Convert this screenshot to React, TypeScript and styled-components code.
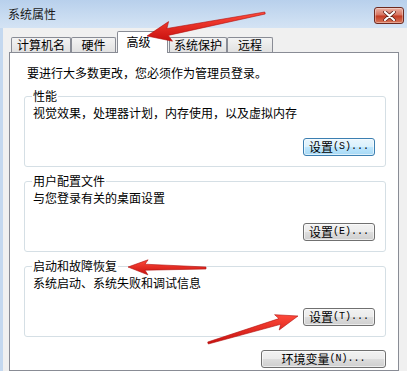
import styled, { createGlobalStyle } from 'styled-components';

const GlobalStyle = createGlobalStyle`
  html, body {
    margin: 0;
    padding: 0;
    background: #f0f0f0;
  }
  body {
    font-family: "Noto Sans CJK SC", "Noto Sans", sans-serif;
    font-size: 12px;
    color: #000;
  }
  * { box-sizing: border-box; }
`;

const Window = styled.div`
  position: relative;
  width: 407px;
  height: 371px;
  overflow: hidden;
  background: #f0f0f0;
  display: flex;
  flex-direction: column;
`;

const TitleBar = styled.div`
  height: 28px;
  flex: none;
  display: flex;
  align-items: center;
  justify-content: space-between;
  padding: 0 3px 0 8px;
  background: linear-gradient(#b8d0ec, #c9dcf1 60%, #d4e3f4);
`;

const Title = styled.span`
  font-size: 12px;
  line-height: 16px;
  color: #1a1a1a;
`;

const CloseButton = styled.div`
  width: 30px;
  height: 17px;
  margin-top: 3px;
  border: 1px solid #6d2a20;
  border-radius: 3px;
  display: flex;
  align-items: center;
  justify-content: center;
  background: linear-gradient(#eab1a4, #d7725e 48%, #c23a22 52%, #d8775a);
  box-shadow: inset 0 0 0 1px rgba(255, 255, 255, 0.35);
`;

const Body = styled.div`
  flex: 1;
  display: flex;
  flex-direction: column;
  padding: 3px 8px 0 6px;
  border-left: 3px solid #c4d8ef;
`;

const TabStrip = styled.div`
  height: 21px;
  display: flex;
  align-items: flex-end;
  padding-left: 2px;
  position: relative;
  z-index: 1;
`;

const Tab = styled.div<{ $w: number; $active?: boolean; $gap?: number }>`
  width: ${(p) => p.$w}px;
  margin-left: ${(p) => p.$gap ?? 0}px;
  height: ${(p) => (p.$active ? 22 : 15)}px;
  margin-bottom: ${(p) => (p.$active ? -1 : 0)}px;
  border: 1px solid #898c95;
  border-bottom: none;
  border-radius: 2px 2px 0 0;
  background: ${(p) => (p.$active ? '#fff' : 'linear-gradient(#f3f3f3, #e1e1e1)')};
  display: flex;
  justify-content: center;
  align-items: ${(p) => (p.$active ? 'flex-start' : 'center')};
  padding-top: ${(p) => (p.$active ? 3 : 0)}px;
  padding-right: ${(p) => (p.$active ? 8 : 0)}px;
  font-size: 12px;
  line-height: 14px;
`;

const Panel = styled.div`
  flex: 1;
  background: #fff;
  border: 1px solid #898c95;
  display: flex;
  flex-direction: column;
  padding: 12px 12px 0 14px;
`;

const Intro = styled.div`
  line-height: 16px;
  padding-left: 3px;
  margin-bottom: 7px;
`;

const Group = styled.fieldset`
  margin: 0 0 6px 0;
  padding: 0 10px 10px 8px;
  border: 1px solid #d5dfe5;
  border-radius: 3px;
  min-width: 0;
`;

const Legend = styled.legend`
  padding: 0 1px;
  margin-left: -1px;
  line-height: 16px;
`;

const Desc = styled.div`
  margin-top: 1px;
  line-height: 16px;
`;

const ButtonRow = styled.div<{ $top: number }>`
  display: flex;
  justify-content: flex-end;
  margin-top: ${(p) => p.$top}px;
`;

const Button = styled.button<{ $w: number; $focus?: boolean }>`
  width: ${(p) => p.$w}px;
  height: 18px;
  padding: 0;
  border: 1px solid ${(p) => (p.$focus ? '#3c7fb1' : '#707070')};
  border-radius: 3px;
  background: ${(p) =>
    p.$focus
      ? 'linear-gradient(#eaf6fd, #d9f0fc 50%, #bee6fd 51%, #a7d9f5)'
      : 'linear-gradient(#f2f2f2, #ebebeb 50%, #dddddd 51%, #cfcfcf)'};
  box-shadow: inset 0 0 0 1px rgba(255, 255, 255, 0.6);
  font-family: "Noto Sans CJK SC", sans-serif;
  font-size: 12px;
  line-height: 16px;
  color: #000;
  display: flex;
  align-items: center;
  justify-content: center;
`;

const Mnemonic = styled.span`
  font-family: "Liberation Mono", monospace;
  font-size: 10px;
`;

const Overlay = styled.svg`
  position: absolute;
  left: 0;
  top: 0;
  pointer-events: none;
  z-index: 5;
`;

type Pt = [number, number];

const arrowPoints = (tail: Pt, tip: Pt, tailW: number, neckW: number, headW: number, headL: number) => {
  const dx = tip[0] - tail[0];
  const dy = tip[1] - tail[1];
  const len = Math.hypot(dx, dy);
  const ux = dx / len;
  const uy = dy / len;
  const nx = -uy;
  const ny = ux;
  const neck: Pt = [tip[0] - ux * headL, tip[1] - uy * headL];
  const barb: Pt = [tip[0] - ux * (headL + 3), tip[1] - uy * (headL + 3)];
  const side = (b: Pt, w: number, s: number) => `${(b[0] + s * nx * w / 2).toFixed(1)},${(b[1] + s * ny * w / 2).toFixed(1)}`;
  return [
    side(tail, tailW, 1),
    side(neck, neckW, 1),
    side(barb, headW, 1),
    `${tip[0]},${tip[1]}`,
    side(barb, headW, -1),
    side(neck, neckW, -1),
    side(tail, tailW, -1),
  ].join(' ');
};

const arrows: { tail: Pt; tip: Pt; neck: number; head: number; len: number }[] = [
  { tail: [265, 13], tip: [147, 36], neck: 7, head: 20, len: 21 },
  { tail: [206, 268], tip: [128, 267], neck: 6, head: 15, len: 17 },
  { tail: [208, 343], tip: [298, 316], neck: 6, head: 16, len: 19 },
];

const CloseIcon = () => (
  <svg width="13" height="10" viewBox="0 0 13 10">
    <path d="M2 1 L11 9 M11 1 L2 9" stroke="#5a1f16" strokeWidth="3.6" strokeLinecap="round" />
    <path d="M2 1 L11 9 M11 1 L2 9" stroke="#fff" strokeWidth="2.2" strokeLinecap="round" />
  </svg>
);

const Label = ({ cn, key1 }: { cn: string; key1: string }) => (
  <>
    {cn}
    <Mnemonic>({key1})...</Mnemonic>
  </>
);

export default function App() {
  return (
    <>
      <GlobalStyle />
      <Window>
        <TitleBar>
          <Title>系统属性</Title>
          <CloseButton>
            <CloseIcon />
          </CloseButton>
        </TitleBar>
        <Body>
          <TabStrip>
            <Tab $w={60}>计算机名</Tab>
            <Tab $w={45}>硬件</Tab>
            <Tab $w={51} $gap={1} $active>
              高级
            </Tab>
            <Tab $w={58} $gap={1}>
              系统保护
            </Tab>
            <Tab $w={46}>远程</Tab>
          </TabStrip>
          <Panel>
            <Intro>要进行大多数更改，您必须作为管理员登录。</Intro>
            <Group>
              <Legend>性能</Legend>
              <Desc>视觉效果，处理器计划，内存使用，以及虚拟内存</Desc>
              <ButtonRow $top={17}>
                <Button $w={72} $focus>
                  <Label cn="设置" key1="S" />
                </Button>
              </ButtonRow>
            </Group>
            <Group>
              <Legend>用户配置文件</Legend>
              <Desc>与您登录有关的桌面设置</Desc>
              <ButtonRow $top={17}>
                <Button $w={72}>
                  <Label cn="设置" key1="E" />
                </Button>
              </ButtonRow>
            </Group>
            <Group>
              <Legend>启动和故障恢复</Legend>
              <Desc>系统启动、系统失败和调试信息</Desc>
              <ButtonRow $top={17}>
                <Button $w={72}>
                  <Label cn="设置" key1="T" />
                </Button>
              </ButtonRow>
            </Group>
            <ButtonRow $top={7}>
              <Button $w={125}>
                <Label cn="环境变量" key1="N" />
              </Button>
            </ButtonRow>
          </Panel>
        </Body>
        <Overlay width="407" height="371" viewBox="0 0 407 371">
          <defs>
            <linearGradient id="red" x1="0" y1="0" x2="0" y2="1">
              <stop offset="0" stopColor="#ff4a3a" />
              <stop offset="1" stopColor="#c8100e" />
            </linearGradient>
          </defs>
          {arrows.map((a, i) => (
            <polygon
              key={i}
              points={arrowPoints(a.tail, a.tip, 2, a.neck, a.head, a.len)}
              fill="url(#red)"
              stroke="#b00d0b"
              strokeWidth="0.6"
              strokeLinejoin="round"
            />
          ))}
        </Overlay>
      </Window>
    </>
  );
}
